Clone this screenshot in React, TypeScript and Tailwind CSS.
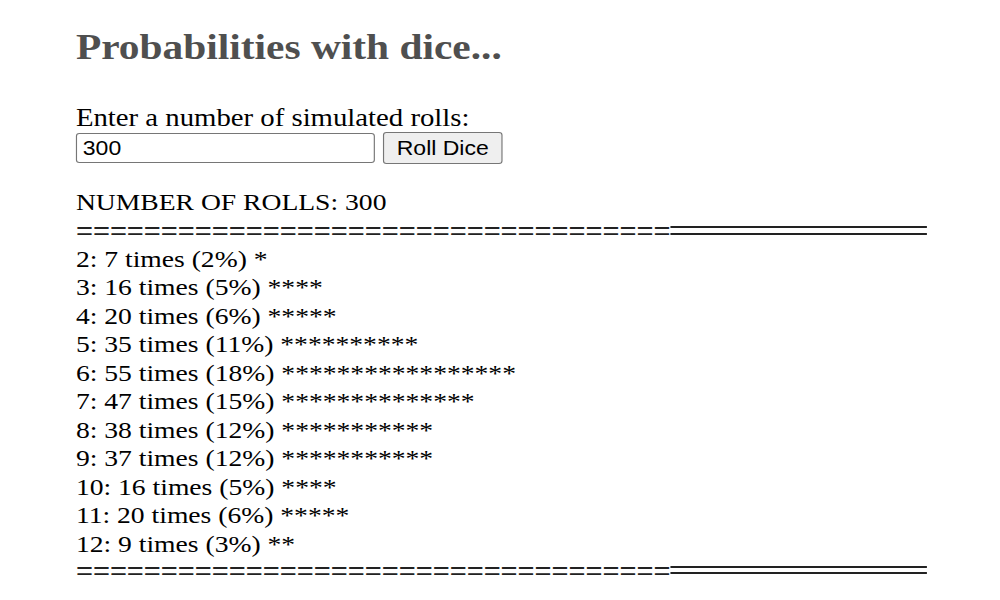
import React from "react";

const rows: [number, number, number][] = [
  [2, 7, 2],
  [3, 16, 5],
  [4, 20, 6],
  [5, 35, 11],
  [6, 55, 18],
  [7, 47, 15],
  [8, 38, 12],
  [9, 37, 12],
  [10, 16, 5],
  [11, 20, 6],
  [12, 9, 3],
];

function Rule({ tall }: { tall: boolean }) {
  return (
    <div className={tall ? "flex h-[28.5px] w-[740px] items-center" : "flex h-[24px] w-[740px] items-center"}>
      <span className="block whitespace-nowrap font-['Liberation_Sans',Arial,sans-serif] text-[25.3px] leading-[25px] text-[#222]">
        {"=".repeat(35)}
      </span>
      <div className="h-[8.7px] flex-1 border-y-2 border-[#222]" />
    </div>
  );
}

export default function App() {
  return (
    <div className="min-h-[600px] w-[1000px] overflow-hidden bg-white">
      <div className="origin-top-left scale-x-[1.15] pl-[66px] pt-[29px] font-['Liberation_Serif','Times_New_Roman',serif] text-[24px] leading-[28.5px] text-black">
        <h2 className="text-[36px] font-bold leading-[36px] text-[#4f4f4f]">
          Probabilities with dice...
        </h2>
        <div className="mt-[38.6px] text-[25px] leading-[28.5px]">Enter a number of simulated rolls:</div>
        <div className="flex h-[32px] items-center gap-[7px]">
          <input
            type="text"
            defaultValue="300"
            className="box-border h-[30px] w-[260px] rounded-[3px] border-[1.5px] border-[#767676] bg-white px-[5px] font-['Liberation_Sans',Arial,sans-serif] text-[20px] text-black outline-none"
          />
          <button className="box-border h-[32px] w-[104px] rounded-[3px] border-[1.5px] border-[#767676] bg-[#efefef] font-['Liberation_Sans',Arial,sans-serif] text-[20px] text-black">
            Roll Dice
          </button>
        </div>
        <div className="mt-[23.5px] leading-[28.5px]">NUMBER OF ROLLS: 300</div>
        <Rule tall={true} />
        <div>
          {rows.map(([n, c, p]) => (
            <div key={n} className="whitespace-pre leading-[28.5px]">
              {`${n}: ${c} times (${p}%) ${"*".repeat(p - 1)}`}
            </div>
          ))}
        </div>
        <Rule tall={false} />
      </div>
    </div>
  );
}
